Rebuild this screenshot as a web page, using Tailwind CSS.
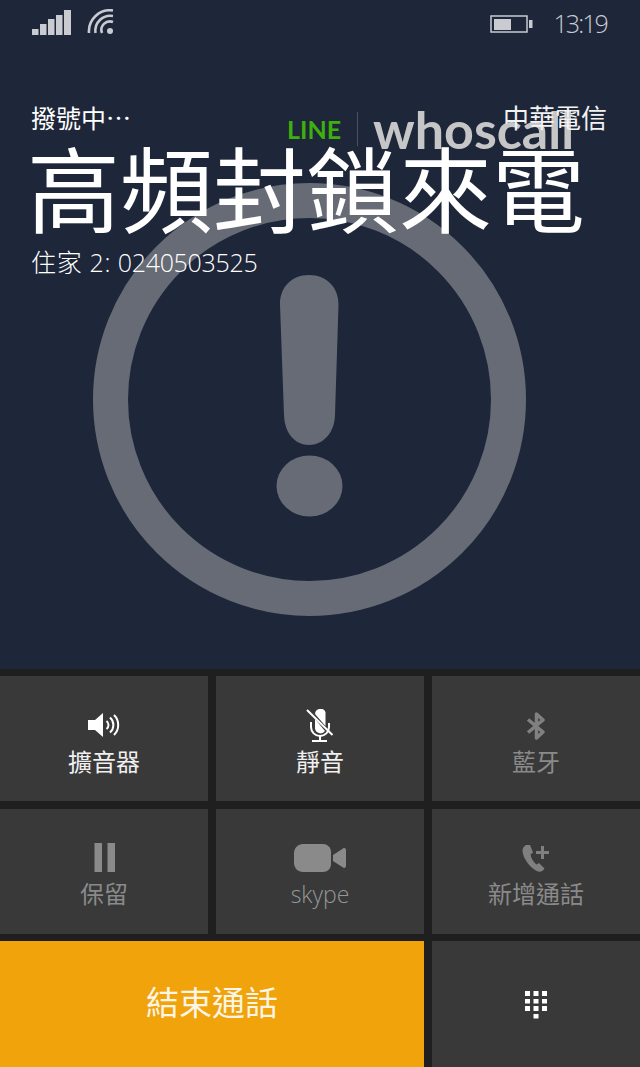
<!DOCTYPE html>
<html lang="zh-Hant">
<head>
    <meta charset="UTF-8">
    <meta name="viewport" content="width=device-width, initial-scale=1.0">
    <title>Call</title>
    <script src="https://cdn.jsdelivr.net/npm/@tailwindcss/browser@4"></script>
</head>
<body class="w-[640px] h-[1067px] overflow-hidden bg-[#1f1f1f] font-['Open_Sans','Noto_Sans_CJK_TC',sans-serif]">
    <!-- Call info -->
    <div class="relative h-[669px] bg-[#1e2639] overflow-hidden">
        <!-- Warning picture behind the text -->
        <svg class="absolute left-[93px] top-[183px]" width="433" height="433" viewBox="0 0 433 433">
            <circle cx="216.5" cy="216.5" r="199" fill="none" stroke="#666b76" stroke-width="35"/>
            <path d="M216 92 C234 92 246 105 245.500 122 L242 232 C241.500 250 230 262 216 262 C202 262 191.500 250 191 232 L187 122 C186.500 105 198 92 216 92 Z" fill="#666b76"/>
            <ellipse cx="216.500" cy="303" rx="33" ry="30.500" fill="#666b76"/>
        </svg>

        <!-- Logo -->
        <div class="absolute left-[287px] top-[101px] flex items-center h-[56px]">
            <span class="w-[56px] text-[25px] font-bold leading-none text-[#3fae0f] font-['Lato',sans-serif]">LINE</span>
            <span class="ml-[14px] w-px h-[34px] bg-[#4b5160]"></span>
            <span class="ml-[15px] text-[52px] font-bold leading-none text-[#c6c6c6] font-['Lato',sans-serif] mt-[-1px]">whoscall</span>
        </div>

        <!-- Status bar -->
        <div class="relative flex items-center h-[46px] pl-[31px] pr-[33px] text-[#c9cbd1]">
            <svg width="41" height="26" viewBox="0 0 41 26" fill="#c9cbd1" class="mt-[-1px]">
                <rect x="1" y="19" width="6.500" height="6"/>
                <rect x="9" y="14" width="6.500" height="11"/>
                <rect x="17" y="9" width="6.500" height="16"/>
                <rect x="25" y="5" width="6.500" height="20"/>
                <rect x="33" y="0" width="7" height="25"/>
            </svg>
            <svg width="28" height="27" viewBox="0 0 28 27" fill="none" stroke="#c9cbd1" stroke-width="2.600" class="ml-[15px] mt-[-1px]">
                <circle cx="23" cy="22" r="3" fill="#c9cbd1" stroke="none"/>
                <path d="M15 24 A8.500 8.500 0 0 1 26 13"/>
                <path d="M8.500 24 A15 15 0 0 1 26 7"/>
                <path d="M2 24 A21 21 0 0 1 26 1.500"/>
            </svg>
            <svg width="43" height="18" viewBox="0 0 43 18" class="ml-auto mt-[2px]">
                <rect x="1" y="1" width="36" height="16" fill="none" stroke="#c9cbd1" stroke-width="1.500"/>
                <rect x="4" y="4" width="17" height="11" fill="#c9cbd1"/>
                <rect x="39" y="5" width="3.500" height="8" fill="#c9cbd1"/>
            </svg>
            <span class="ml-[20px] text-[25px] font-light leading-none tracking-[-1.9px] font-['Open_Sans',sans-serif]">13:19</span>
        </div>

        <!-- Caller -->
        <div class="relative flex justify-between pl-[31px] pr-[33px] pt-[57px] text-[25px] leading-[30px] text-white">
            <span>撥號中⋯</span>
            <span class="text-[26px] text-[#f2f2f2]">中華電信</span>
        </div>
        <h1 class="relative pl-[27px] mt-[4px] text-[93px] leading-[106px] text-white whitespace-nowrap">高頻封鎖來電</h1>
        <p class="relative pl-[31px] mt-[3px] text-[25px] font-light leading-[32px] text-white"><span class="tracking-[0.7px]">住家 2:</span> <span class="tracking-[-0.3px]">0240503525</span></p>
    </div>

    <!-- Call buttons -->
    <div class="grid grid-cols-[208px_208px_208px] grid-rows-[125px_125px_126px] gap-x-[8px] gap-y-[7.500px] pt-[7px] text-[24px] leading-[30px]">
        <button class="flex flex-col items-center bg-[#393939] text-[#f0f0f0] pt-[36px]">
            <svg width="32" height="26" viewBox="0 0 32 26" fill="#ffffff">
                <path d="M0 8 H7 L15 1 V25 L7 18 H0 Z"/>
                <g fill="none" stroke="#ffffff" stroke-width="2">
                    <path d="M18.500 9 A5 5 0 0 1 18.500 17"/>
                    <path d="M22 5.500 A10 10 0 0 1 22 20.500"/>
                    <path d="M26 3 A14 14 0 0 1 26 23"/>
                </g>
            </svg>
            <span class="mt-[9px]">擴音器</span>
        </button>
        <button class="flex flex-col items-center bg-[#393939] text-[#f0f0f0] pt-[33px]">
            <svg width="28" height="33" viewBox="0 0 28 33" fill="#ffffff">
                <path d="M9 5 A5.500 5.500 0 0 1 19.500 3 V17 Z"/>
                <path d="M9 10 L19 22 A5.500 5.500 0 0 1 9 19 Z"/>
                <g fill="none" stroke="#ffffff" stroke-width="2">
                    <path d="M1 1 L26.500 26"/>
                    <path d="M5 13 V18 A9 9 0 0 0 14 27 A9 9 0 0 0 23 18 V14"/>
                    <path d="M14 27 V32 M6 32 H21"/>
                </g>
            </svg>
            <span class="mt-[5px]">靜音</span>
        </button>
        <button class="flex flex-col items-center bg-[#393939] text-[#8a8a8a] pt-[36px]">
            <svg width="20" height="28" viewBox="0 0 20 28" fill="none" stroke="#808080" stroke-width="3.500" stroke-linejoin="round">
                <path d="M2 7.500 L17 20 L10.500 26 V2 L17 8 L2 20.500"/>
            </svg>
            <span class="mt-[7px]">藍牙</span>
        </button>
        <button class="flex flex-col items-center bg-[#393939] text-[#8a8a8a] pt-[34px]">
            <svg width="21" height="29" viewBox="0 0 21 29" fill="#8a8a8a">
                <rect x="0.500" y="0" width="7.500" height="29"/>
                <rect x="13.500" y="0" width="7.500" height="29"/>
            </svg>
            <span class="mt-[7px]">保留</span>
        </button>
        <button class="flex flex-col items-center bg-[#393939] text-[#969696] pt-[35px]">
            <svg width="52" height="28" viewBox="0 0 52 28" fill="#8a8a8a">
                <path d="M9 0 H29 C33 0 37 3 37 8 V20 C37 25 33 28 29 28 H9 C4 28 0 24 0 19 V9 C0 4 4 0 9 0 Z"/>
                <path d="M39 11 L49 4.500 C50.500 3.500 52 4.500 52 6 V22 C52 23.500 50.500 24.500 49 23.500 L39 17 Z"/>
            </svg>
            <span class="mt-[7px] text-[23px] font-light font-['Open_Sans',sans-serif]">skype</span>
        </button>
        <button class="flex flex-col items-center bg-[#393939] text-[#8a8a8a] pt-[35px]">
            <svg width="28" height="28" viewBox="0 0 28 28" fill="#808080">
                <path d="M4 1 C2 2 0.500 4 0.500 7 C1 15 9 25 16 27.500 C19 28 21.500 27 22.500 24.500 L17 19 L14.500 20.500 C11.500 18 9 14 8.500 10.500 L11 8.500 L8 1 Z"/>
                <path d="M14 7 H19 V2 H22 V7 H27 V10 H22 V15 H19 V10 H14 Z"/>
            </svg>
            <span class="mt-[7px]">新增通話</span>
        </button>
        <button class="col-span-2 flex items-center justify-center bg-[#f0a30a] text-[33px] text-[#fdf5e6] pb-[2px]">結束通話</button>
        <button class="flex items-center justify-center bg-[#393939]">
            <svg width="23" height="28" viewBox="0 0 23 28" fill="#ffffff" class="mt-[1px]">
                <rect x="0" y="0" width="5" height="5"/><rect x="8.500" y="0" width="5" height="5"/><rect x="17" y="0" width="5" height="5"/>
                <rect x="0" y="8" width="5" height="4.500"/><rect x="8.500" y="8" width="5" height="4.500"/><rect x="17" y="8" width="5" height="4.500"/>
                <rect x="0" y="15" width="5" height="5"/><rect x="8.500" y="15" width="5" height="5"/><rect x="17" y="15" width="5" height="5"/>
                <rect x="8.500" y="23" width="5" height="4.500"/>
            </svg>
        </button>
    </div>
</body>
</html>
